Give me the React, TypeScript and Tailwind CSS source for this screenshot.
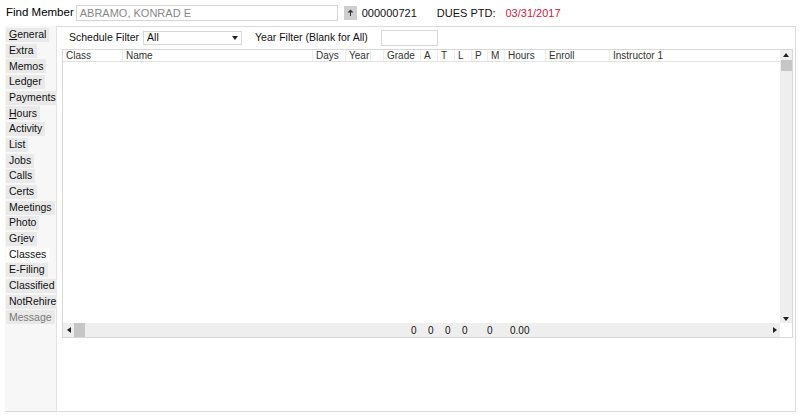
import React from "react";

const tabs = [
  { key: "general", label: <><u>G</u>eneral</> },
  { key: "extra", label: "Extra" },
  { key: "memos", label: "Memos" },
  { key: "ledger", label: "Ledger" },
  { key: "payments", label: "Payments" },
  { key: "hours", label: <><u>H</u>ours</> },
  { key: "activity", label: "Activity" },
  { key: "list", label: "List" },
  { key: "jobs", label: "Jobs" },
  { key: "calls", label: "Calls" },
  { key: "certs", label: "Certs" },
  { key: "meetings", label: "Meetings" },
  { key: "photo", label: "Photo" },
  { key: "griev", label: <>Gr<u>i</u>ev</> },
  { key: "classes", label: "Classes" },
  { key: "efiling", label: "E-Filing" },
  { key: "classified", label: "Classified" },
  { key: "notrehire", label: "NotRehire" },
  { key: "message", label: "Message" },
];

const columns = [
  { name: "Class", w: "w-[60px]" },
  { name: "Name", w: "w-[190px]" },
  { name: "Days", w: "w-[33px]" },
  { name: "Year", w: "w-[25px]" },
  { name: "", w: "w-[13px]" },
  { name: "Grade", w: "w-[37px]" },
  { name: "A", w: "w-[17px]" },
  { name: "T", w: "w-[17px]" },
  { name: "L", w: "w-[17px]" },
  { name: "P", w: "w-[16px]" },
  { name: "M", w: "w-[17px]" },
  { name: "Hours", w: "w-[41px]" },
  { name: "Enroll", w: "w-[64px]" },
  { name: "Instructor 1", w: "flex-1" },
];

function Tri({ dir }: { dir: "up" | "down" | "left" | "right" }) {
  const pts = {
    up: "0,5 3,1 6,5",
    down: "0,1 3,5 6,1",
    left: "5,0 1,3 5,6",
    right: "1,0 5,3 1,6",
  }[dir];
  return (
    <svg width="6" height="6" viewBox="0 0 6 6" className="block">
      <polygon points={pts} fill="#222" />
    </svg>
  );
}

export default function App() {
  return (
    <div className="w-[800px] h-[416px] bg-white flex flex-col font-['Liberation_Sans',Arial,sans-serif] text-[#111] overflow-hidden">
      {/* top bar */}
      <div className="h-[26px] flex items-center pl-[6px] text-[11.5px]">
        <span className="text-black">Find Member</span>
        <div className="ml-[2px] w-[262px] h-[16px] border border-[#d4d4d4] flex items-center pl-[3px] text-[11px] text-[#888]">
          ABRAMO, KONRAD E
        </div>
        <button className="ml-[6px] w-[13px] h-[14px] bg-[#cfcfcf] flex items-center justify-center">
          <svg width="7" height="8" viewBox="0 0 7 8">
            <polygon points="0.5,3.5 3.5,0.5 6.5,3.5" fill="#333" />
            <rect x="3" y="3" width="1" height="4" fill="#333" />
          </svg>
        </button>
        <span className="ml-[5px] text-[11px]">000000721</span>
        <span className="ml-[20px] text-[11px]">DUES PTD:</span>
        <span className="ml-[10px] text-[11px] text-[#d4213a]">03/31/2017</span>
      </div>

      <div className="flex h-[386px] border-b border-[#dcdcdc] ml-[5px] mr-[4px]">
        {/* side tabs */}
        <nav className="w-[52px] bg-[#f7f7f7] border-r border-[#e2e2e2] flex flex-col gap-[1.7px] pt-[2px] pl-[1px]">
          {tabs.map((t) => (
            <div
              key={t.key}
              className={
                "h-[14px] self-start px-[3px] flex items-center text-[10.5px] whitespace-nowrap " +
                (t.key === "classes" ? "bg-white" : "bg-[#e9e9e9]") +
                (t.key === "message" ? " text-[#7a7a7a]" : " text-[#111]")
              }
            >
              {t.label}
            </div>
          ))}
        </nav>

        {/* main panel */}
        <main className="flex-1 border-t border-r border-[#dcdcdc] bg-white flex flex-col">
          <div className="h-[21px] flex items-center text-[10.5px] pl-[12px]">
            <span>Schedule Filter</span>
            <div className="ml-[4px] w-[99px] h-[14px] border border-[#d8d8d8] flex items-center justify-between px-[3px] text-[10.5px]">
              <span>All</span>
              <Tri dir="down" />
            </div>
            <span className="ml-[13px]">Year Filter (Blank for All)</span>
            <div className="ml-[13px] w-[57px] h-[16px] border border-[#d8d8d8]" />
          </div>

          <div className="ml-[5px] mt-[1px] w-[731px] h-[289px] border border-[#d8d8d8] flex flex-col text-[10px]">
            <div className="flex flex-1 min-h-0">
              <div className="flex-1 flex flex-col">
                <div className="h-[12px] flex border-b border-[#e2e2e2] text-[#333]">
                  {columns.map((c, i) => (
                    <div
                      key={i}
                      className={c.w + " pl-[3px] leading-[12px] whitespace-nowrap border-r border-[#ececec] last:border-r-0"}
                    >
                      {c.name}
                    </div>
                  ))}
                </div>
                <div className="flex-1" />
              </div>
              <div className="w-[12px] bg-[#eeeeee] flex flex-col items-center">
                <div className="h-[10px] flex items-center">
                  <Tri dir="up" />
                </div>
                <div className="w-[11px] h-[11px] bg-[#c6c6c6]" />
                <div className="flex-1" />
                <div className="h-[9px] flex items-center">
                  <Tri dir="down" />
                </div>
              </div>
            </div>
            <div className="h-[14px] flex">
              <div className="flex-1 bg-[#eeeeee] flex items-center text-[10px] text-[#111]">
                <div className="w-[11px] flex justify-center">
                  <Tri dir="left" />
                </div>
                <div className="w-[11px] h-full bg-[#c6c6c6]" />
                <span className="ml-[326px] w-[6px]">0</span>
                <span className="ml-[11px] w-[6px]">0</span>
                <span className="ml-[11px] w-[6px]">0</span>
                <span className="ml-[11px] w-[6px]">0</span>
                <span className="ml-[19px] w-[6px]">0</span>
                <span className="ml-[17px]">0.00</span>
                <div className="ml-auto w-[10px] flex justify-center">
                  <Tri dir="right" />
                </div>
              </div>
              <div className="w-[12px] bg-white" />
            </div>
          </div>
        </main>
      </div>
    </div>
  );
}
